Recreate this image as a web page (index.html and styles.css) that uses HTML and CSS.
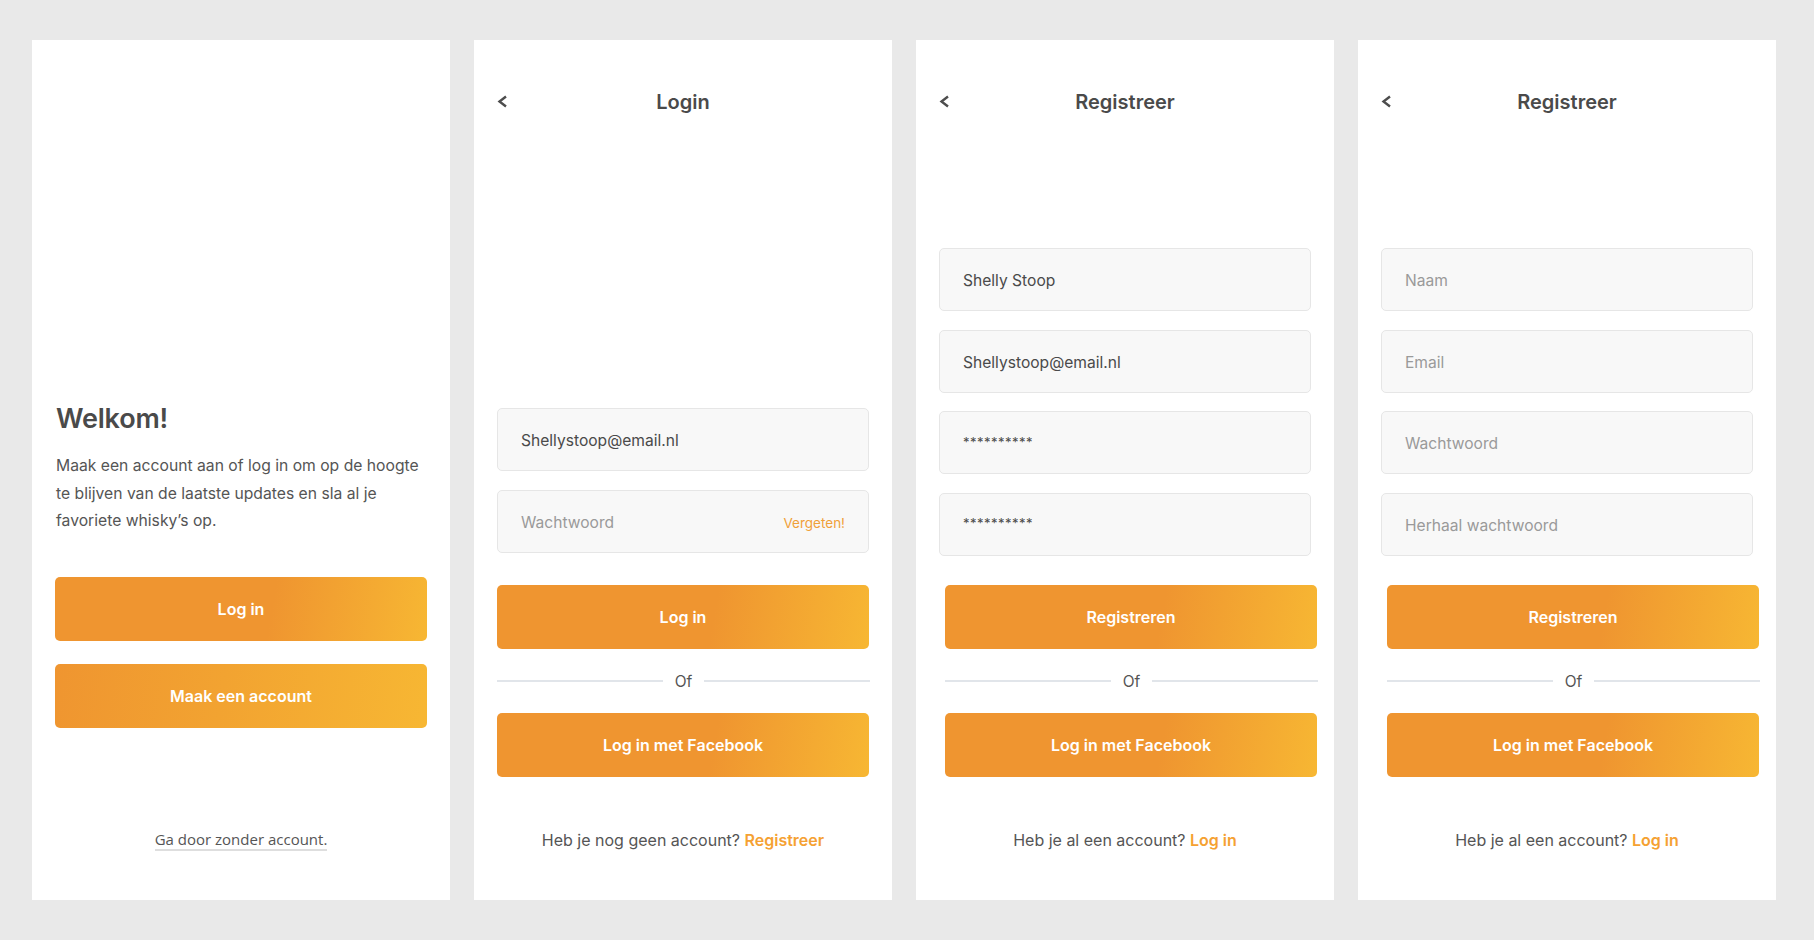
FILE: index.html
```html
<!DOCTYPE html>
<html lang="nl">
<head>
<meta charset="utf-8">
<title>Whisky app – schermen</title>
<link rel="stylesheet" href="styles.css">
</head>
<body>
<div class="board">

  <section class="screen screen-welcome">
    <h1 class="welcome-title">Welkom!</h1>
    <p class="welcome-text">Maak een account aan of log in om op de hoogte te blijven van de laatste updates en sla al je favoriete whisky’s op.</p>
    <div class="btn-stack">
      <button class="btn">Log in</button>
      <button class="btn btn-alt">Maak een account</button>
    </div>
    <a class="skip-link" href="#">Ga door zonder account.</a>
  </section>

  <section class="screen">
    <header class="topbar">
      <span class="back"><svg width="11" height="13" viewBox="0 0 11 13"><polyline points="9,1.5 2.5,6.5 9,11.5" fill="none" stroke="#4d4d4d" stroke-width="2.4" stroke-linejoin="miter"/></svg></span>
      <h2 class="topbar-title">Login</h2>
    </header>
    <div class="fields fields-login">
      <div class="field"><span class="val">Shellystoop@email.nl</span></div>
      <div class="field"><span class="ph">Wachtwoord</span><span class="forgot">Vergeten!</span></div>
    </div>
    <div class="actions actions-login">
      <button class="btn">Log in</button>
      <div class="divider"><span class="line"></span><span class="or">Of</span><span class="line"></span></div>
      <button class="btn">Log in met Facebook</button>
    </div>
    <p class="footer-note">Heb je nog geen account? <a href="#">Registreer</a></p>
  </section>

  <section class="screen">
    <header class="topbar">
      <span class="back"><svg width="11" height="13" viewBox="0 0 11 13"><polyline points="9,1.5 2.5,6.5 9,11.5" fill="none" stroke="#4d4d4d" stroke-width="2.4" stroke-linejoin="miter"/></svg></span>
      <h2 class="topbar-title">Registreer</h2>
    </header>
    <div class="fields fields-register">
      <div class="field"><span class="val">Shelly Stoop</span></div>
      <div class="field"><span class="val">Shellystoop@email.nl</span></div>
      <div class="field"><span class="val stars">**********</span></div>
      <div class="field"><span class="val stars">**********</span></div>
    </div>
    <div class="actions actions-register">
      <button class="btn">Registreren</button>
      <div class="divider"><span class="line"></span><span class="or">Of</span><span class="line"></span></div>
      <button class="btn">Log in met Facebook</button>
    </div>
    <p class="footer-note">Heb je al een account? <a href="#">Log in</a></p>
  </section>

  <section class="screen">
    <header class="topbar">
      <span class="back"><svg width="11" height="13" viewBox="0 0 11 13"><polyline points="9,1.5 2.5,6.5 9,11.5" fill="none" stroke="#4d4d4d" stroke-width="2.4" stroke-linejoin="miter"/></svg></span>
      <h2 class="topbar-title">Registreer</h2>
    </header>
    <div class="fields fields-register">
      <div class="field"><span class="ph">Naam</span></div>
      <div class="field"><span class="ph">Email</span></div>
      <div class="field"><span class="ph">Wachtwoord</span></div>
      <div class="field"><span class="ph">Herhaal wachtwoord</span></div>
    </div>
    <div class="actions actions-register">
      <button class="btn">Registreren</button>
      <div class="divider"><span class="line"></span><span class="or">Of</span><span class="line"></span></div>
      <button class="btn">Log in met Facebook</button>
    </div>
    <p class="footer-note">Heb je al een account? <a href="#">Log in</a></p>
  </section>

</div>
</body>
</html>
```

FILE: styles.css
```css
* { box-sizing: border-box; }

html, body {
  margin: 0;
  padding: 0;
}

body {
  background: #e9e9e9;
  font-family: "Inter", "Roboto", "Liberation Sans", sans-serif;
  color: #4a4a4a;
  width: 1814px;
  height: 940px;
  overflow: hidden;
}

.board {
  display: flex;
  gap: 24px;
  padding: 40px 0 0 32px;
}

.screen {
  width: 418px;
  height: 860px;
  background: #fff;
  display: flex;
  flex-direction: column;
  padding: 0 23px;
}

/* ---------- welcome ---------- */
.welcome-title {
  margin: 361px 0 0 1px;
  font-size: 27px;
  line-height: 36px;
  font-weight: 600;
  color: #4a4a4a;
  letter-spacing: -0.2px;
}

.welcome-text {
  margin: 15px 0 0 1px;
  font-size: 15.7px;
  line-height: 27.6px;
  color: #555;
}

.btn-stack {
  display: flex;
  flex-direction: column;
  gap: 23px;
  margin-top: 42px;
}

.btn {
  display: flex;
  align-items: center;
  justify-content: center;
  width: 372px;
  height: 64px;
  border: 0;
  border-radius: 5px;
  background: linear-gradient(100deg, #ef9530 0%, #ef9530 58%, #f7b733 100%);
  color: #fff;
  font-family: inherit;
  font-size: 16px;
  font-weight: 600;
  padding: 0;
}

.btn-alt {
  background: linear-gradient(100deg, #ef9530 0%, #f2a331 45%, #f7b733 100%);
}

.skip-link {
  align-self: center;
  margin-top: 101px;
  font-family: "Open Sans", "Noto Sans", sans-serif;
  font-size: 15px;
  line-height: 20px;
  color: #555;
  text-decoration: none;
  border-bottom: 2px solid #dedede;
}

/* ---------- top bar ---------- */
.topbar {
  position: relative;
  display: flex;
  align-items: center;
  justify-content: center;
  height: 40px;
  margin-top: 42px;
}

.back {
  position: absolute;
  left: 0;
  top: 13px;
  width: 11px;
  height: 13px;
  display: block;
}

.back svg { display: block; }

.topbar-title {
  margin: 0;
  font-size: 20px;
  font-weight: 600;
  color: #4a4a4a;
}

/* ---------- fields ---------- */
.fields {
  display: flex;
  flex-direction: column;
}

.fields-login {
  margin-top: 286px;
  gap: 19px;
}

.fields-register {
  margin-top: 126px;
  gap: 18.5px;
}

.field {
  width: 372px;
  height: 63px;
  background: #f8f8f8;
  border: 1px solid #e6e6e6;
  border-radius: 5px;
  display: flex;
  align-items: center;
  justify-content: space-between;
  padding: 2px 23px 0;
  font-size: 15.6px;
}

.val { color: #4a4a4a; }

.stars {
  font-size: 13px;
  letter-spacing: 0.5px;
  margin-top: -4px;
}

.ph { color: #9a9a9a; }

.forgot {
  color: #f0a038;
  font-size: 13.5px;
}

/* ---------- actions ---------- */
.actions {
  display: flex;
  flex-direction: column;
}

.actions-login { margin-top: 32px; }

.actions-register {
  margin-top: 29.5px;
  margin-left: 6px;
}

.divider {
  display: flex;
  align-items: center;
  height: 20px;
  margin: 22px 0;
  width: 373px;
}

.divider .line {
  flex: 1;
  height: 2px;
  background: #e1e5ea;
}

.divider .or {
  padding: 0 12px;
  font-size: 15.5px;
  color: #555;
}

.footer-note {
  margin: 53px 0 0;
  text-align: center;
  font-size: 16px;
  line-height: 20px;
  color: #555;
}

.footer-note a {
  color: #f5a132;
  font-weight: 600;
  text-decoration: none;
}
```
